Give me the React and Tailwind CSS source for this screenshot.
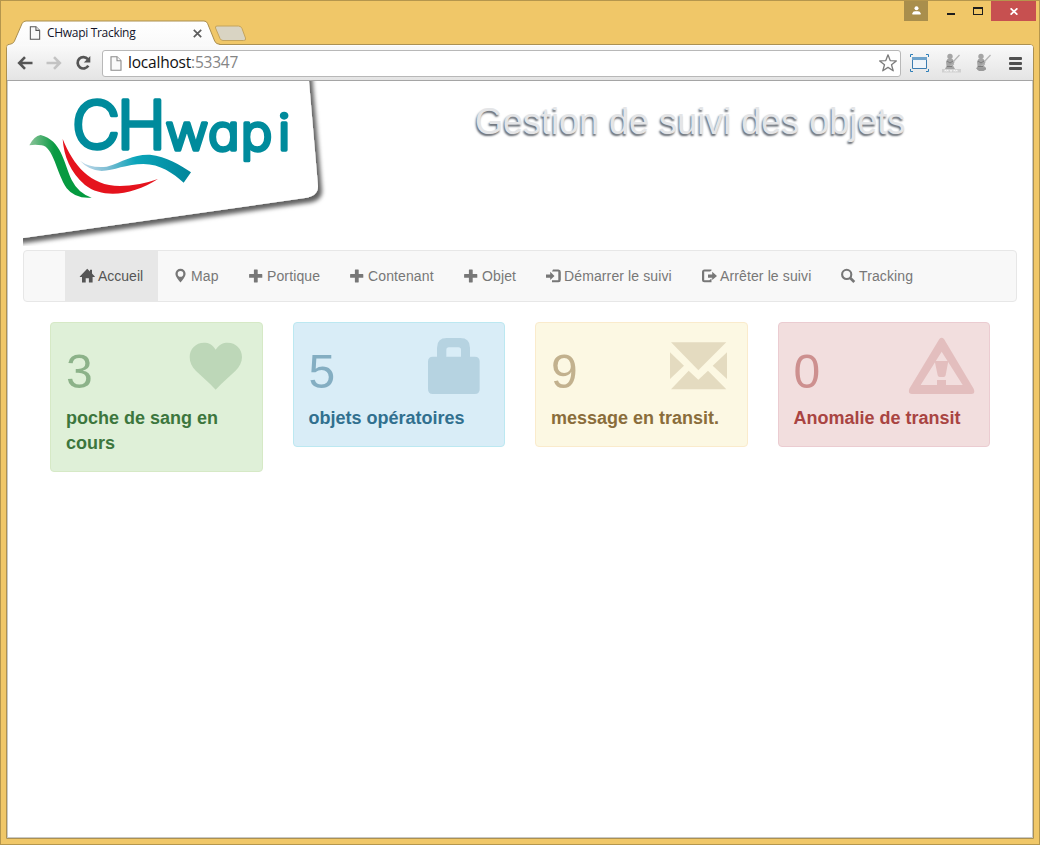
import React from "react";

const navItems = [
  { label: "Accueil", icon: "home", width: "w-[93px]", active: true },
  { label: "Map", icon: "marker", width: "w-[76px]" },
  { label: "Portique", icon: "plus", width: "w-[101px]" },
  { label: "Contenant", icon: "plus", width: "w-[114px]" },
  { label: "Objet", icon: "plus", width: "w-[82px]" },
  { label: "Démarrer le suivi", icon: "login", width: "w-[156px]" },
  { label: "Arrêter le suivi", icon: "logout", width: "w-[139px]" },
  { label: "Tracking", icon: "search", width: "w-[102px]" },
];

function NavIcon({ name }) {
  return (
    <svg className="h-[14px] w-[14px] shrink-0 overflow-visible" viewBox="0 0 14 14" fill="currentColor">
      {name === "home" && <path d="M7.200 -.3 10 2.500V.8H12V4.500L14.800 7.500V8H12.600V13.500H8.900V9.200H5.700V13.500H2V8H-.2V7.500Z" />}
      {name === "marker" && (
        <path transform="translate(.5 0)" fillRule="evenodd" d="M7 -.2a5.100 5.100 0 0 1 5.100 5.100c0 2.700-3 5.700-5.100 8.700C4.900 10.600 1.900 7.600 1.900 4.900A5.100 5.100 0 0 1 7 -.2Zm0 2.300a2.800 2.800 0 1 0 0 5.600 2.800 2.800 0 0 0 0-5.600Z" />
      )}
      {name === "plus" && <path d="M5.300.5h3a.4.4 0 0 1 .4.4V5h4.200a.4.4 0 0 1 .4.4v3a.4.4 0 0 1-.4.4H8.700v4.300a.4.4 0 0 1-.4.400h-3a.4.4 0 0 1-.4-.4V8.800H.5a.4.4 0 0 1-.4-.4v-3A.4.4 0 0 1 .5 5h4.400V.9a.4.4 0 0 1 .4-.4Z" />}
      {name === "login" && (
        <>
          <path d="M0 5.500h4.200V2.800L8.500 7 4.200 11V8.800H0Z" />
          <path d="M7 .5h5.200A2.500 2.500 0 0 1 14.800 3v7.800a2.500 2.500 0 0 1-2.600 2.500H6V11.200h6.300V2.600H6Z" />
        </>
      )}
      {name === "logout" && (
        <>
          <path d="M6 5.500h4.200V2.800L15 7l-4.800 4V8.800H6Z" />
          <path d="M9.500.5H2.500A2.500 2.500 0 0 0 0 3v7.800a2.500 2.500 0 0 0 2.500 2.500H9.500V9.500L7.400 11.200H2.200V2.600H8L9.500 1.500Z" />
        </>
      )}
      {name === "search" && (
        <>
          <circle cx="5.700" cy="5.400" r="4.600" fill="none" stroke="currentColor" strokeWidth="2.100" />
          <path d="m8.700 8.600 4.600 4.400" stroke="currentColor" strokeWidth="2.700" />
        </>
      )}
    </svg>
  );
}

function Heart() {
  return <path d="M527 104C537 88 549 83 563 83C588 83 606 102 606 126C606 142 599 155 586 168L560 192Q543 207 527 224Q511 207 494 192L468 168C455 155 449 142 449 126C449 102 467 83 492 83C506 83 518 88 527 104Z" />;
}
function Bag() {
  return <path fillRule="evenodd" d="M471 125V98Q471 69 500 69H541Q570 69 570 98V125H585Q599 125 599 139V223Q599 237 585 237H458Q444 237 444 223V139Q444 125 458 125ZM499 125H543V105Q543 97 535 97H507Q499 97 499 105Z" />;
}
function Mail() {
  return <path d="M438 82H604L520 166ZM435 112 477 152 435 192ZM606 112V192L563 152ZM491 167 520 194 549 167 604 223H438Z" />;
}
function Warning() {
  return (
    <>
      <path fillRule="evenodd" d="M523 72Q530 65 537 72L626 221Q632 237 619 237H441Q428 237 433 221ZM530 110 467 210H593Z" />
      <path d="M509 138H550L542 181Q541 186 536 186H524Q519 186 518 181ZM516 195H543V210H516Z" />
    </>
  );
}

const cards = [
  { n: 3, label: "poche de sang en cours", cls: "bg-[#dff0d8] border-[#d6e9c6] text-[#3c763d]", box: "417 63 204 180", Icon: Heart },
  { n: 5, label: "objets opératoires", cls: "bg-[#d9edf7] border-[#bce8f1] text-[#31708f]", box: "423 63 204 180", Icon: Bag },
  { n: 9, label: "message en transit.", cls: "bg-[#fcf8e3] border-[#faebcc] text-[#8a6d3b]", box: "417 63 204 180", Icon: Mail },
  { n: 0, label: "Anomalie de transit", cls: "bg-[#f2dede] border-[#ebccd1] text-[#a94442]", box: "423 63 204 180", Icon: Warning },
];

function PageIcon({ className }) {
  return (
    <svg className={className} viewBox="0 0 12 15" fill="#fafafa" stroke="currentColor" strokeWidth="1.100">
      <path d="M1 .7H7L11 4.700V14.200H1Z" />
      <path d="M7 .7V4.700H11" />
    </svg>
  );
}

function TitleBar() {
  return (
    <div className="relative z-10 flex h-[43px] items-start pl-[5px] pr-[3px]">
      <div className="relative mt-[19px] h-[25px] w-[216px]">
        <svg className="absolute inset-0 h-full w-full overflow-visible" viewBox="18 60 648 75">
          <defs>
            <linearGradient id="tab" x1="0" x2="0" y1="0" y2="1">
              <stop offset="0" stopColor="#fff" />
              <stop offset="1" stopColor="#f9f9f9" />
            </linearGradient>
          </defs>
          <path d="M21 137Q22 133 29 133Q39 132 43 124L66 71Q70 63 78 63H612Q620 63 623 71L644 123Q648 133 658 133V137Z" fill="url(#tab)" />
          <path d="M21 137Q22 133 29 133Q39 132 43 124L66 71Q70 63 78 63H612Q620 63 623 71L644 123Q648 133 660 133" fill="none" stroke="#a98e50" strokeWidth="3" />
        </svg>
        <div className="relative flex h-full items-center pl-[23px] pt-px">
          <PageIcon className="h-[14px] w-[12px] text-[#555]" />
          <span className="ml-[6px] w-[140px] whitespace-nowrap font-['Open_Sans',sans-serif] text-[12px] tracking-[-0.31px] text-[#14142a]">CHwapi Tracking</span>
          <svg className="ml-[6px] h-[9px] w-[9px]" viewBox="0 0 9 9" stroke="#5c5c5c" strokeWidth="1.700">
            <path d="M.8.8 8.200 8.200M8.200.8.8 8.200" />
          </svg>
        </div>
      </div>
      <svg className="-ml-[8px] mt-[24px] h-[17px] w-[33px]" viewBox="0 0 33 17">
        <path d="M3 1H24.500Q27 1 28 3.500L31.500 13Q32.500 15.500 29.500 15.500H9Q7 15.500 6 13.500L1.500 3Q1 1 3 1Z" fill="#d9d4c3" stroke="#c5a45c" />
      </svg>
      <div className="ml-auto flex h-[20px]">
        <div className="flex w-[24px] items-center justify-center bg-[#a98e4c]">
          <svg className="h-[9px] w-[9px] -translate-y-px" viewBox="0 0 9 9" fill="#fff">
            <circle cx="4.500" cy="2.200" r="2" />
            <path d="M.4 8.500V7.200Q.8 5.200 3 5.200H6Q8.200 5.200 8.600 7.200V8.500Z" />
          </svg>
        </div>
        <div className="ml-[19px] mt-[12px] h-[2px] w-[8px] bg-[#1d1d1d]" />
        <div className="ml-[18px] mt-[6px] h-[8px] w-[10px] border border-t-2 border-[#1d1d1d]" />
        <div className="ml-[8px] flex w-[45px] items-center justify-center bg-[#c75050]">
          <svg className="h-[7px] w-[8px]" viewBox="0 0 8 7" stroke="#fff" strokeWidth="1.700">
            <path d="M.6.3 7.400 6.700M7.400.3.6 6.700" />
          </svg>
        </div>
      </div>
    </div>
  );
}

function Figure({ label }) {
  return (
    <svg className="h-[20px] w-[20px]" viewBox="0 0 20 20">
      <g fill="#a4a4a4">
        <circle cx="8" cy="3.500" r="2.700" />
        <path d="M5.500 6h5l2 3-1.500 3.500 2 3.500H3l1.500-3L4 8.500Z" />
        <path d="m11 9 6.500-7M8 13l4-2" stroke="#b5b5b5" strokeWidth="1.300" fill="none" />
      </g>
      <path d="M5 8 8 10 11 8M5 13.500H10" stroke="#777" strokeWidth=".9" fill="none" />
      {label ? <path d="M0 16H19V19.500H0Z" fill="#d0d0d0" /> : <path d="M4 14.500H13V16.500L10.500 18H6L4 16.500Z" fill="#999" />}
      {label && <path d="M3 18.500V17l1.500 1L6 17v1.500M8 17l1 1.500 1-1.500M12 18.500V17l1.500 1L15 17v1.500" stroke="#fff" strokeWidth=".8" fill="none" />}
    </svg>
  );
}

function Toolbar() {
  return (
    <div className="flex h-[36px] shrink-0 items-center rounded-t-[3px] border-b border-[#a5a5a5] border-t border-t-[#fdfdfd] bg-linear-to-b from-[#f9f9f9] to-[#e4e4e4] pl-[10px]">
      <svg className="h-[14px] w-[16px]" viewBox="0 0 16 14" fill="none" stroke="#555" strokeWidth="2.600">
        <path d="M15.500 7H2.500M8 1.200 2.200 7 8 12.800" />
      </svg>
      <svg className="ml-[13px] h-[14px] w-[16px]" viewBox="0 0 16 14" fill="none" stroke="#c3c3c3" strokeWidth="2.600">
        <path d="M.5 7H13.500M8 1.200 13.800 7 8 12.800" />
      </svg>
      <svg className="ml-[13px] h-[16px] w-[16px]" viewBox="0 0 16 16">
        <path d="M12.800 4.200A5.700 5.700 0 1 0 13.300 10.600" fill="none" stroke="#555" strokeWidth="2.700" />
        <path d="M15.300 1V7.500H8.800Z" fill="#555" />
      </svg>
      <div className="ml-[11px] flex h-[27px] w-[799px] items-center rounded-[3px] border border-[#b8b8b8] bg-white pl-[7px] pr-[3px]">
        <PageIcon className="h-[15px] w-[12px] text-[#8a8a8a]" />
        <span className="ml-[6px] -mt-[2px] font-['Open_Sans',sans-serif] text-[15.5px] leading-[20px] tracking-[-0.21px] text-[#111]">
          localhost<span className="text-[#858585]">:53347</span>
        </span>
        <svg className="ml-auto h-[18px] w-[18px]" viewBox="0 0 18 18" fill="#fff" stroke="#7c7c7c" strokeWidth="1.300" strokeLinejoin="round">
          <path d="m9 .8 2.200 5.800 6.100.3-4.800 3.900 1.700 6L9 13.400 3.800 16.800l1.700-6L.7 6.900l6.100-.3Z" />
        </svg>
      </div>
      <svg className="ml-[9px] h-[18px] w-[19px]" viewBox="0 0 19 18">
        <path d="M2.500 3.500h14v11h-14Z" fill="#eff4f9" stroke="#3c7cb0" />
        <path d="M2 3h15v3H2Z" fill="#6ea3cb" />
        <path d="M.5 3V.5H3M16 .5h2.500V3M.5 15v2.500H3M16 17.500h2.500V15" fill="none" stroke="#2f7fb8" />
      </svg>
      <div className="ml-[13px] flex gap-[11px]">
        <Figure label />
        <Figure />
      </div>
      <div className="ml-[16px] flex flex-col gap-[2px]">
        <span className="h-[3px] w-[13px] rounded-[1px] bg-[#505050]" />
        <span className="h-[3px] w-[13px] rounded-[1px] bg-[#505050]" />
        <span className="h-[3px] w-[13px] rounded-[1px] bg-[#505050]" />
      </div>
    </div>
  );
}

function Logo() {
  return (
    <svg className="h-[165px] w-[305px] shrink-0" viewBox="69 3 915 495">
      <defs>
        <filter id="shade" x="-10%" y="-10%" width="120%" height="125%">
          <feDropShadow dx="12" dy="14" stdDeviation="7" floodColor="#000" floodOpacity="0.62" />
        </filter>
        <linearGradient id="green" x1="0" x2="1" y1="0" y2="0">
          <stop offset="0" stopColor="#8cc49a" />
          <stop offset=".4" stopColor="#0a9a43" />
          <stop offset="1" stopColor="#009a3c" />
        </linearGradient>
        <linearGradient id="blue" x1="0" x2="1" y1="0" y2="0">
          <stop offset="0" stopColor="#c5dcec" />
          <stop offset=".25" stopColor="#7dbdd3" />
          <stop offset=".5" stopColor="#0ba5ba" />
          <stop offset="1" stopColor="#00859a" />
        </linearGradient>
      </defs>
      <path d="M20 -60H922L927 3 954 318Q955 348 915 354L20 481Z" fill="#fff" filter="url(#shade)" />
      <path d="M88 196Q102 168 122 165C185 182 190 245 215 300Q235 340 275 353Q225 357 200 325C170 280 160 200 125 196Q105 192 88 196Z" fill="url(#green)" />
      <path d="M188 177C220 255 270 318 360 318Q415 318 474 297C400 345 310 358 255 315C210 275 192 230 188 177Z" fill="#e5131d" />
      <path d="M240 242Q270 265 320 260C370 245 400 222 450 224C500 229 540 255 573 277L551 308C520 280 480 252 430 252C380 252 340 272 305 273Q265 270 240 242Z" fill="url(#blue)" />
      <g fill="#008b9c" stroke="#008b9c" strokeWidth="10" strokeLinejoin="round" className="font-['Inter',sans-serif] font-light [font-feature-settings:'cv11']">
        <text fontSize="200" y="208" x="215 350">CH</text>
        <text transform="scale(1.05 1)" fontSize="150" y="209" x="473 594 688 794">wapi</text>
      </g>
    </svg>
  );
}

export default function App() {
  return (
    <div className="flex h-[845px] w-[1040px] flex-col border border-[#b5964d] bg-[#f0c768] font-['Liberation_Sans',Arial,sans-serif]">
      <TitleBar />
      <div className="mx-[5px] mb-[5px] flex min-h-0 flex-1 flex-col rounded-t-[4px] border border-[#ab9052] bg-white">
        <Toolbar />
        <div className="flex min-h-0 flex-1 flex-col border-x border-b border-[#c9c9c6] px-[15px]">
          <header className="flex h-[169px] shrink-0 items-start">
            <Logo />
            <h1 className="ml-[147px] mt-[20px] whitespace-nowrap text-[36px] leading-[42px] text-[#e4e5e7] [text-shadow:-1px_2px_2px_#656b73]">
              Gestion de suivi des objets
            </h1>
          </header>
          <nav className="flex h-[52px] shrink-0 rounded-[4px] border border-[#e7e7e7] bg-[#f8f8f8] pl-[41px] text-[14px] text-[#777]">
            {navItems.map((item) => (
              <a
                key={item.label}
                className={
                  "flex shrink-0 items-center gap-[4px] whitespace-nowrap px-[15px] " +
                  item.width +
                  (item.active ? " bg-[#e7e7e7] text-[#555]" : " tracking-[0.12px]")
                }
              >
                <NavIcon name={item.icon} />
                {item.label}
              </a>
            ))}
          </nav>
          <main className="mx-[27px] mt-[20px] grid grid-cols-4 items-start gap-[30px]">
            {cards.map(({ n, label, cls, box, Icon }) => (
              <section key={label} className={"rounded-[4px] border p-[15px] " + cls}>
                <div className="flex h-[68px] items-start justify-between">
                  <span className="text-[48px] leading-[68px] opacity-50">{n}</span>
                  <svg className="-mt-0.5 h-[60px] w-[68px] overflow-visible opacity-20" viewBox={box} fill="currentColor">
                    <Icon />
                  </svg>
                </div>
                <div className="text-[18px] font-bold leading-[25px]">{label}</div>
              </section>
            ))}
          </main>
        </div>
      </div>
    </div>
  );
}
